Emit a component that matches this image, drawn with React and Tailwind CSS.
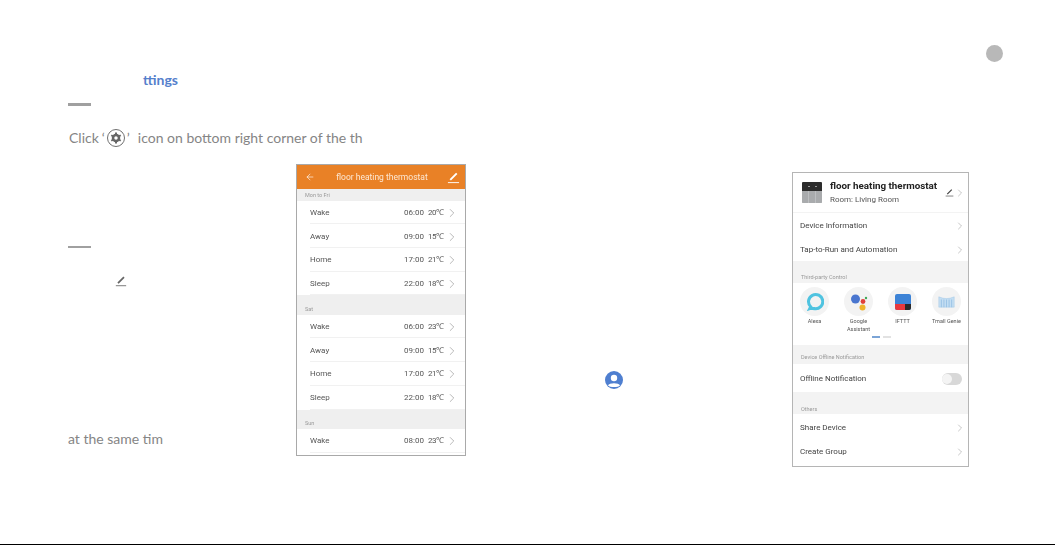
import React from 'react';
import { ChevronRight, ArrowLeft } from 'lucide-react';

const schedule = [
  { label: 'Mon to Fri', band: 'h-[11.5px] items-center', rows: [['Wake', '06:00', '20℃'], ['Away', '09:00', '15℃'], ['Home', '17:00', '21℃'], ['Sleep', '22:00', '18℃']] },
  { label: 'Sat', band: 'h-[19.5px] items-end pb-[2px]', rows: [['Wake', '06:00', '23℃'], ['Away', '09:00', '15℃'], ['Home', '17:00', '21℃'], ['Sleep', '22:00', '18℃']] },
  { label: 'Sun', band: 'h-[19.5px] items-end pb-[2px]', rows: [['Wake', '08:00', '23℃']] },
];

const Pencil = ({ className }) => (
  <svg viewBox="0 0 14 14" className={className} fill="none" stroke="currentColor">
    <path d="M3.5 9.5 10.500 2.500" strokeWidth="2" />
    <path d="M1 12.500H13" strokeWidth="1" />
  </svg>
);

const ScheduleRow = ({ name, time, temp }) => (
  <div className="flex h-[23.7px] items-center border-b border-[#f1f1f1] ml-[13px] pt-[2px] pr-[6px] text-[8px] text-[#555]">
    <span className="flex-1">{name}</span>
    <span className="mr-[4px]">{time}</span>
    <span className="w-[14px] whitespace-nowrap tracking-[-0.6px]">{temp}</span>
    <ChevronRight className="ml-[3px] w-[14px] h-[14px] text-[#888]" strokeWidth={1} />
  </div>
);

const SchedulePhone = () => (
  <div className="absolute left-[296px] top-[164px] w-[170px] h-[292px] border border-[#a9a9a9] bg-white overflow-hidden font-['Roboto',sans-serif] blur-[0.3px]">
    <div className="flex h-[24px] items-center bg-[#e98126] text-white pl-[8px] pr-[5px]">
      <ArrowLeft className="w-[10px] h-[10px]" strokeWidth={1.5} />
      <span className="flex-1 pl-[2px] text-center text-[8.5px] text-[#fde8d4]">floor heating thermostat</span>
      <Pencil className="w-[13px] h-[13px]" />
    </div>
    {schedule.map((group) => (
      <div key={group.label}>
        <div className={`flex ${group.band} bg-[#efefef] px-[8px] text-[5.5px] text-[#999]`}>{group.label}</div>
        {group.rows.map(([name, time, temp]) => (
          <ScheduleRow key={name} name={name} time={time} temp={temp} />
        ))}
      </div>
    ))}
  </div>
);

const DeviceRow = ({ label, className }) => (
  <div className={`flex items-center pl-[7px] pr-[2px] text-[8px] text-[#444] ${className}`}>
    <span className="flex-1">{label}</span>
    <ChevronRight className="w-[12px] h-[12px] text-[#999]" strokeWidth={1.1} />
  </div>
);

const Band = ({ label, className }) => (
  <div className={`flex items-end bg-[#f3f3f3] px-[8px] text-[5.5px] text-[#999] ${className}`}>{label}</div>
);

const Circle = ({ children }) => (
  <div className="flex h-[29px] w-[29px] items-center justify-center rounded-full bg-[#f3f3f3]">{children}</div>
);

const services = [
  {
    name: 'Alexa',
    icon: (
      <svg viewBox="0 0 20 20" className="h-[19px] w-[19px]" fill="none" stroke="#4fc3e0" strokeWidth="3.2">
        <path d="M5 17.500 6 15.500A7.500 7.500 0 1 1 10 17.500C8 17.500 6.500 17 5 17.500Z" />
      </svg>
    ),
  },
  {
    name: 'Google Assistant',
    icon: (
      <svg viewBox="0 0 20 20" className="h-[20px] w-[20px]">
        <circle cx="6.500" cy="7" r="4.500" fill="#4a76cf" />
        <circle cx="14" cy="9.500" r="2.400" fill="#e0403a" />
        <circle cx="17" cy="6" r="1.200" fill="#3fa757" />
        <circle cx="13.500" cy="15.500" r="3" fill="#efb32b" />
      </svg>
    ),
  },
  {
    name: 'IFTTT',
    icon: (
      <div className="flex h-[16px] w-[16px] flex-col overflow-hidden rounded-[2px] bg-[#3d83d6]">
        <div className="flex-1" />
        <div className="flex h-[6px]">
          <div className="flex-1 bg-[#e8383d]" />
          <div className="w-[6px] bg-[#2b2b2b]" />
        </div>
      </div>
    ),
  },
  {
    name: 'Tmall Genie',
    icon: (
      <svg viewBox="0 0 20 14" className="h-[12px] w-[19px]" stroke="#9cc4e6" fill="#c4def2">
        <path d="M1 1 Q10 5 19 1 V13 H1Z" strokeWidth="0.5" />
        <path d="M4 4V13M7 4V13M10 4V13M13 4V13M16 4V13" strokeWidth="1.200" />
      </svg>
    ),
  },
];

const DevicePhone = () => (
  <div className="absolute left-[792px] top-[172px] w-[177px] h-[295px] border border-[#b5b5b5] bg-white overflow-hidden font-['Roboto',sans-serif] blur-[0.3px]">
    <div className="flex h-[40px] items-center pl-[9px] pr-[2px] border-b border-[#f3f3f3]">
      <div className="flex h-[21px] w-[20px] flex-col overflow-hidden rounded-[1px]">
        <div className="flex h-[9px] items-center justify-around bg-[#2c2c2c] px-[3px]">
          <div className="h-[1px] w-[2px] bg-[#999]" />
          <div className="h-[1px] w-[2px] bg-[#999]" />
        </div>
        <div className="flex flex-1 gap-[1px] bg-[#bdbfc1]">
          <div className="flex-1 bg-[#a9abad]" />
          <div className="flex-1 bg-[#a9abad]" />
          <div className="flex-1 bg-[#a9abad]" />
        </div>
      </div>
      <div className="ml-[8px] flex-1">
        <div className="text-[9.8px] font-bold leading-[14px] text-[#222] whitespace-nowrap">floor heating thermostat</div>
        <div className="text-[8px] leading-[14px] text-[#555]">Room: Living Room</div>
      </div>
      <Pencil className="w-[9px] h-[9px] text-[#444]" />
      <ChevronRight className="w-[12px] h-[12px] text-[#999]" strokeWidth={1.1} />
    </div>
    <DeviceRow label="Device Information" className="h-[26px]" />
    <DeviceRow label="Tap-to-Run and Automation" className="h-[22px]" />
    <Band label="Third-party Control" className="h-[22px] pb-[2px]" />
    <div className="flex justify-between px-[7px] pt-[4px]">
      {services.map((s) => (
        <div key={s.name} className="flex w-[29px] flex-col items-center">
          <Circle>{s.icon}</Circle>
          <span className="mt-[1px] w-[36px] text-center text-[5.5px] leading-[8px] text-[#555]">{s.name}</span>
        </div>
      ))}
    </div>
    <div className="flex justify-center gap-[3px] h-[3px] mt-[3px] mb-[6px] pl-[2px]">
      <div className="h-[1.5px] w-[8px] bg-[#7ba4d6]" />
      <div className="h-[1.5px] w-[8px] bg-[#e2e2e2]" />
    </div>
    <Band label="Device Offline Notification" className="h-[19px] pb-[3px]" />
    <div className="flex h-[28px] items-center pt-[1px] pl-[7px] pr-[6px] text-[8px] text-[#444]">
      <span className="flex-1">Offline Notification</span>
      <div className="flex h-[12px] w-[20px] items-center rounded-full bg-[#d8d8d8]">
        <div className="h-[10px] w-[10px] rounded-full bg-[#f4f4f4]" />
      </div>
    </div>
    <Band label="Others" className="h-[22px] pb-[1px]" />
    <DeviceRow label="Share Device" className="h-[27px]" />
    <DeviceRow label="Create Group" className="h-[22px]" />
  </div>
);

const App = () => {
  return (
    <div className="relative h-[545px] w-[1055px] overflow-hidden bg-white font-['Lato',sans-serif]">
      <span className="absolute left-[143px] top-[69px] text-[14px] font-bold text-[#5580cc]">ttings</span>
      <div className="absolute left-[68px] top-[103px] h-[3px] w-[23px] bg-[#a0a0a0]" />

      <div className="absolute left-[69px] top-[128px] flex items-center text-[14px] leading-[20px] text-[#858585]">
        <span>Click</span>
        <span className="ml-[3px]">‘</span>
        <span className="ml-[2px] flex h-[18px] w-[18px] items-center justify-center rounded-full border border-[#707070]">
          <svg viewBox="0 0 24 24" className="h-[12px] w-[12px] text-[#666]" fill="none" stroke="currentColor" strokeWidth="5">
            <circle cx="12" cy="12" r="6" />
            <path d="M12 1v4M12 19v4M2.500 6.500l3.500 2M18 15.500l3.500 2M2.500 17.500l3.500-2M18 8.500l3.500-2" strokeWidth="4" />
          </svg>
        </span>
        <span className="ml-[2px]">’</span>
        <span className="ml-[8px]">icon on bottom right corner of the th</span>
      </div>

      <div className="absolute left-[68px] top-[246px] h-[2px] w-[23px] bg-[#a0a0a0]" />
      <Pencil className="absolute left-[115px] top-[275px] h-[12px] w-[12px] text-[#666]" />
      <span className="absolute left-[68px] top-[429px] text-[14px] leading-[20px] text-[#858585]">at the same tim</span>

      <SchedulePhone />

      <div className="absolute left-[605px] top-[371px] h-[18px] w-[18px] overflow-hidden rounded-full bg-[#4f7fd0]">
        <svg viewBox="0 0 18 18" className="h-full w-full" fill="#fff">
          <circle cx="9" cy="7" r="3.200" />
          <path d="M3 14.500C4 11.500 14 11.500 15 14.500C13 16.500 5 16.500 3 14.500Z" />
        </svg>
      </div>

      <DevicePhone />

      <div className="absolute left-[986px] top-[45px] h-[17px] w-[17px] rounded-full bg-[#b8b8b8]" />
      <div className="absolute bottom-0 left-0 h-[1px] w-full bg-black" />
    </div>
  );
};

export default App;
